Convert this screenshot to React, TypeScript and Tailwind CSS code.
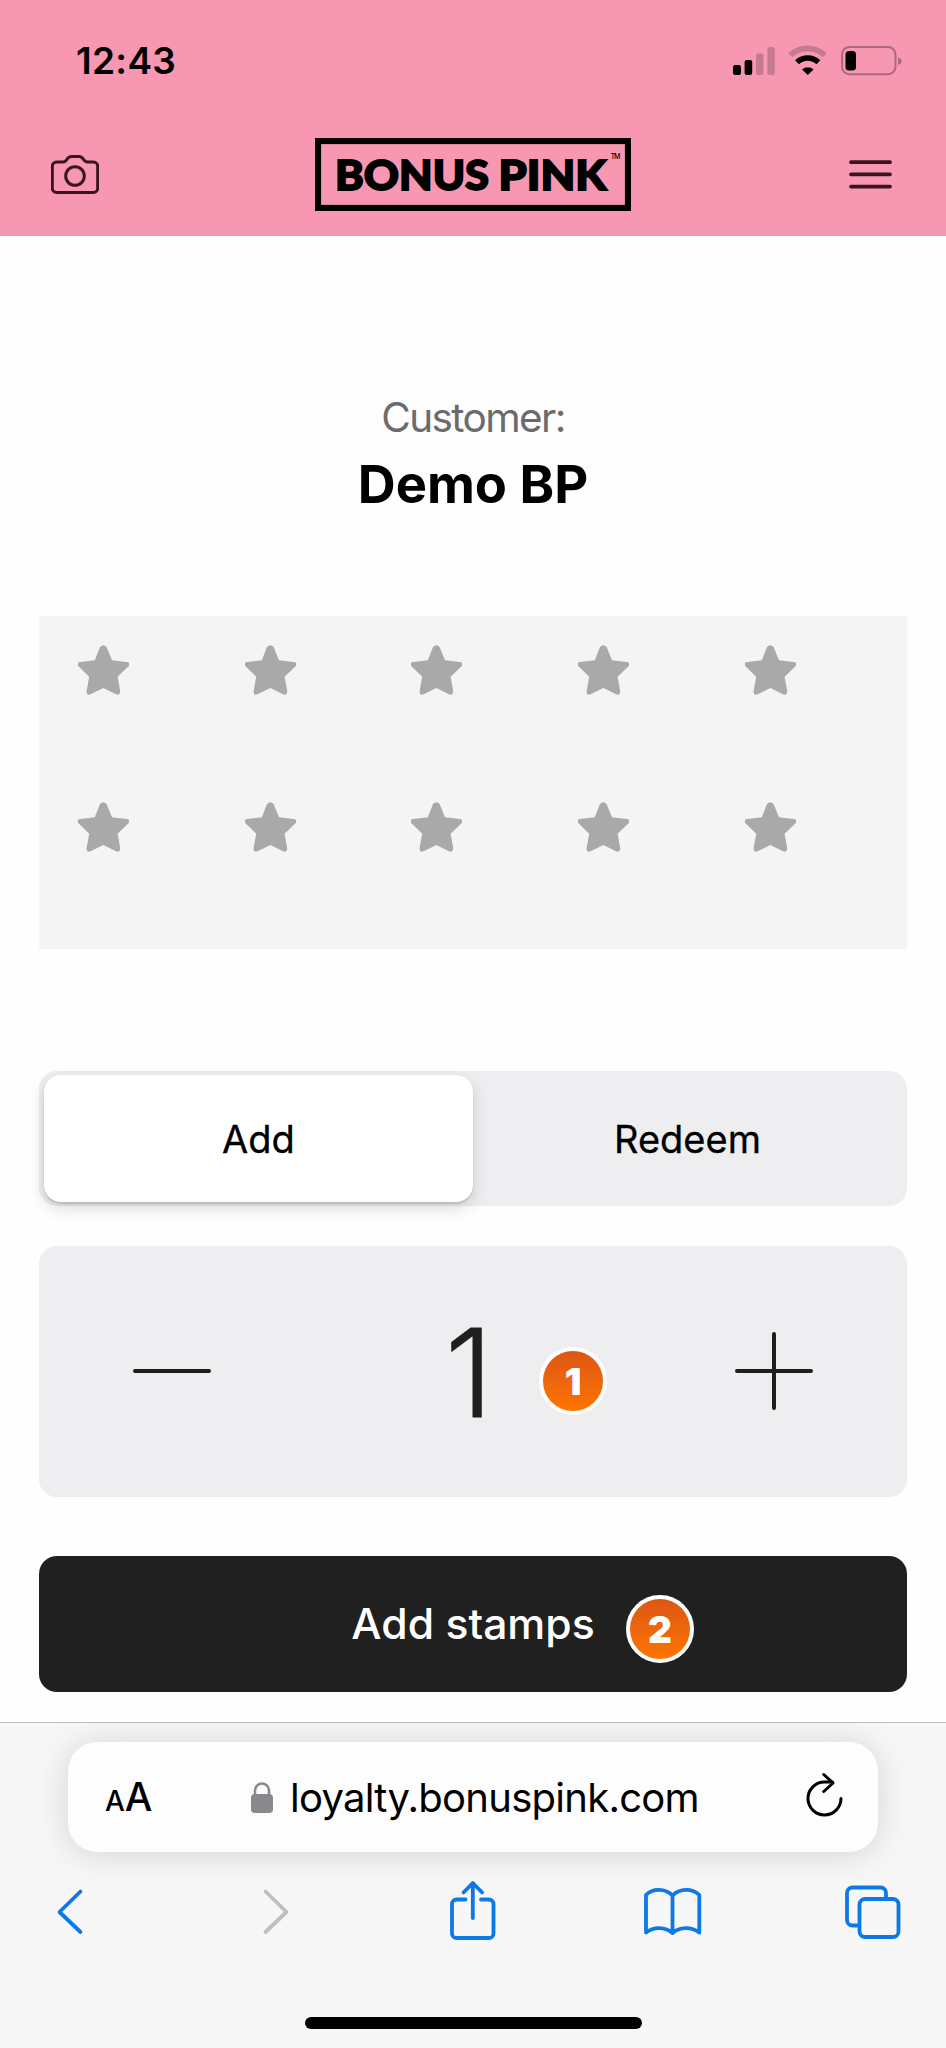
import { useState } from "react";

const STAMPS = Array.from({ length: 10 }, (_, i) => i);

function StatusBar() {
  return (
    <div className="flex h-[121px] items-center justify-between pl-[76px] pr-[43px]">
      <span className="text-[37px] font-semibold leading-none tracking-[0.3px]">12:43</span>
      <svg width="171" height="31" viewBox="732 44 171 31" fill="none">
        <rect x="733" y="64" width="8" height="10" rx="2.2" fill="#000" />
        <rect x="744.6" y="59" width="7.6" height="15" rx="2.2" fill="#000" />
        <rect x="756" y="52.5" width="7.4" height="21.5" rx="2.2" fill="#c67a90" />
        <rect x="767.4" y="46" width="7.4" height="28" rx="2.2" fill="#c67a90" />
        <path d="M790.2 54.3a25 25 0 0 1 34.600 0" stroke="#c67a90" strokeWidth="5.600" />
        <path d="M797 61.300a15.500 15.500 0 0 1 21.400 0" stroke="#000" strokeWidth="5.600" />
        <path d="M802 68.500a8.500 8.500 0 0 1 11.600 0L807.800 74Z" fill="#000" />
        <rect x="842" y="46" width="53.500" height="27.200" rx="7.500" stroke="#ad6a7c" strokeWidth="2" />
        <rect x="845.500" y="50" width="10.500" height="19.500" rx="3.500" fill="#000" />
        <path d="M898 56.500c5 1.300 5 6.200 0 7.500Z" fill="#ad6a7c" />
      </svg>
    </div>
  );
}

function Header() {
  return (
    <header className="border-b-8 border-[#f09aaf] bg-[#f797b1]">
      <StatusBar />
      <div className="flex h-[107px] items-center justify-between pl-[51px] pr-[53px]">
        <svg className="mr-[-2px]" width="48" height="40" viewBox="0 0 48 40" fill="none" stroke="#3a1420" strokeWidth="3">
          <path d="M5.500 7h6.500c2 0 3-1 4-2.700C17 2.500 18 1.500 20.500 1.500h7.500c2.200 0 3.400 1 4.400 2.800C33.500 6 34.500 7 36.500 7H42.500a4.200 4.200 0 0 1 4.200 4.200V33.300a4.200 4.200 0 0 1-4.200 4.200h-37a4.200 4.200 0 0 1-4.200-4.200V11.200A4.200 4.200 0 0 1 5.500 7Z" />
          <circle cx="24" cy="21" r="9.300" />
        </svg>
        <svg width="316" height="73" viewBox="0 0 316 73" fontFamily="Lato, sans-serif" fontWeight="900">
          <rect x="3" y="3" width="310" height="67" fill="none" stroke="#000" strokeWidth="6.200" />
          <g stroke="#000" strokeWidth="1.800" fontSize="42.500">
            <text x="20" y="52.300" textLength="154" lengthAdjust="spacingAndGlyphs">BONUS</text>
            <text x="183.500" y="52.300" textLength="108" lengthAdjust="spacingAndGlyphs">PINK</text>
          </g>
          <text x="295.500" y="21" fontFamily="Inter, sans-serif" fontWeight="500" fontSize="7" textLength="10">TM</text>
        </svg>
        <svg width="45" height="29" viewBox="0 0 45 29" stroke="#3a1420" strokeWidth="3.800" strokeLinecap="round">
          <path d="M3 2.200H42M3 14.300H42M3 26.600H42" />
        </svg>
      </div>
    </header>
  );
}

function Star() {
  return (
    <svg width="51" height="50" viewBox="0 0 51 50" fill="#a9a9a9">
      <path d="M22 2Q25.300-1.500 28.600 2L34 15.200L48.500 17Q53 17.500 50.500 21.300L39.600 31.700L42.200 46Q42 51 38 49.300L25.400 43L12.600 49.300Q8.500 51 8.600 46L11.200 31.700L.5 21.300Q-2 17.500 2.300 17L16.800 15.200Z" />
    </svg>
  );
}

function Badge({ n, className }: { n: number; className: string }) {
  return (
    <span
      className={`absolute flex size-[68px] items-center justify-center rounded-full border-4 border-white bg-gradient-to-b from-[#dd5713] to-[#ff7400] text-[37px] font-black leading-none text-white ${className}`}
    >
      {n}
    </span>
  );
}

function BrowserBar() {
  return (
    <footer className="mt-[30px] flex h-[326px] flex-col overflow-hidden border-t border-[#bdbdbd] bg-[#f7f7f7]">
      <div className="mx-[68px] mt-[18.500px] flex h-[110px] shrink-0 items-center rounded-[29px] bg-[#fdfdfd] pl-[37px] pr-[34px] shadow-[0_2px_34px_rgba(0,0,0,0.15)]">
        <div className="flex w-[48px] items-baseline font-medium leading-none">
          <span className="text-[28px]">A</span>
          <span className="text-[39px]">A</span>
        </div>
        <div className="ml-[98px] flex items-center">
          <svg width="22" height="32" viewBox="0 0 22 32">
            <path d="M4 15V9.500a7 7 0 0 1 14 0V15" fill="none" stroke="#8a898e" strokeWidth="2.600" />
            <rect y="13" width="22" height="19" rx="3.800" fill="#8a898e" />
          </svg>
          <span className="ml-[17px] mt-0.5 whitespace-nowrap text-[40px] leading-none tracking-[-0.720px]">loyalty.bonuspink.com</span>
        </div>
        <svg className="mb-1 ml-auto" width="38" height="46" viewBox="806 1772 38 46" fill="none" stroke="#000" strokeWidth="3" strokeLinecap="round" strokeLinejoin="round">
          <path d="M841 1798.500a16.500 16.500 0 1 1-16.500-16.500h8" />
          <path d="M823.800 1774.500L833 1783L823.800 1791.500" />
        </svg>
      </div>
      <svg className="mt-[28px] shrink-0" width="946" height="62" viewBox="0.500 1880 946 62" fill="none" stroke="#0d78e8" strokeWidth="3.800" strokeLinecap="round" strokeLinejoin="round">
        <path d="M81 1891.500L60 1912L81 1932" />
        <path d="M266 1891.500L287 1912L266 1932" stroke="#bfbfbf" />
        <path d="M466 1899.500H457a4.500 4.500 0 0 0-4.500 4.500V1933.500a4.500 4.500 0 0 0 4.500 4.500H489.500a4.500 4.500 0 0 0 4.500-4.500V1904a4.500 4.500 0 0 0-4.500-4.500H481.500M473.300 1883.500V1918M464 1892.500L473.300 1883L482.600 1892.500" />
        <path d="M673 1895.500C666 1888 653 1888 646.500 1895V1932.500C654 1926.500 666 1926.500 673 1933C680 1926.500 692 1926.500 699.800 1932.500V1895C693 1888 680 1888 673 1895.500ZM673 1895.500V1933" />
        <path d="M858 1925.500H853a5.500 5.500 0 0 1-5.500-5.500V1893a5.500 5.500 0 0 1 5.500-5.500H881a5.500 5.500 0 0 1 5.500 5.500V1897.500" />
        <rect x="860" y="1899" width="39" height="38" rx="5.500" />
      </svg>
      <div className="mx-auto mt-[75px] h-3 w-[337px] shrink-0 rounded-full bg-black" />
    </footer>
  );
}

export default function App() {
  const [mode, setMode] = useState<"add" | "redeem">("add");
  const [count, setCount] = useState(1);

  const tab = "flex flex-1 items-center justify-center rounded-[17px] text-[38px] leading-none [-webkit-text-stroke:0.3px_#000]";
  const active = "bg-white shadow-[0_6px_16px_rgba(0,0,0,0.15),0_2px_2px_rgba(0,0,0,0.12)]";

  return (
    <div className="h-[2048px] w-[946px] overflow-hidden bg-[#fefefe] font-['Inter',sans-serif] text-black">
      <Header />

      <main className="px-[39px] pt-[152px]">
        <div className="text-center">
          <p className="text-[40.500px] leading-[60px] tracking-[-1.600px] text-[#6b6b6b]">Customer:</p>
          <h1 className="text-[52.500px] font-bold leading-[72px]">Demo BP</h1>
        </div>

        {/* Stamp card */}
        <div className="mt-24 grid h-[333px] auto-rows-[156.500px] grid-cols-[repeat(5,166.670px)] bg-[#f4f4f4] pl-[39px] pt-[29px]">
          {STAMPS.map(i => <Star key={i} />)}
        </div>

        <div className="mt-[122px] flex h-[135px] rounded-[18px] bg-[#eeedf0] px-[5px] py-1">
          <button className={`${tab} ${mode === "add" ? active : ""}`} onClick={() => setMode("add")}>Add</button>
          <button className={`${tab} ${mode === "redeem" ? active : ""}`} onClick={() => setMode("redeem")}>Redeem</button>
        </div>

        {/* Quantity */}
        <div className="relative mt-10 flex h-[251px] items-center justify-between rounded-[18px] bg-[#eeedf0] px-[94px]">
          <button className="mb-0.5" aria-label="Decrease" onClick={() => setCount(c => Math.max(1, c - 1))}>
            <svg width="78" height="78" viewBox="0 0 78 78" stroke="#1f1f1f" strokeWidth="4" strokeLinecap="round"><path d="M2 39H76" /></svg>
          </button>
          <span className="mr-[8px] mt-0.5 text-[122px] font-light leading-none text-[#1f1f1f] [-webkit-text-stroke:0.8px_#1f1f1f]">{count}</span>
          <button className="mb-0.5" aria-label="Increase" onClick={() => setCount(c => c + 1)}>
            <svg width="78" height="78" viewBox="0 0 78 78" stroke="#1f1f1f" strokeWidth="4" strokeLinecap="round"><path d="M2 39H76M39 2V76" /></svg>
          </button>
          <Badge n={1} className="left-[500px] top-[101px]" />
        </div>

        <button className="relative mt-[59px] flex h-[136px] w-full items-center justify-center rounded-[18px] bg-[#202020] text-[42.700px] font-medium leading-none text-white">
          Add stamps
          <Badge n={2} className="left-[587px] top-[39px]" />
        </button>
      </main>

      <BrowserBar />
    </div>
  );
}
